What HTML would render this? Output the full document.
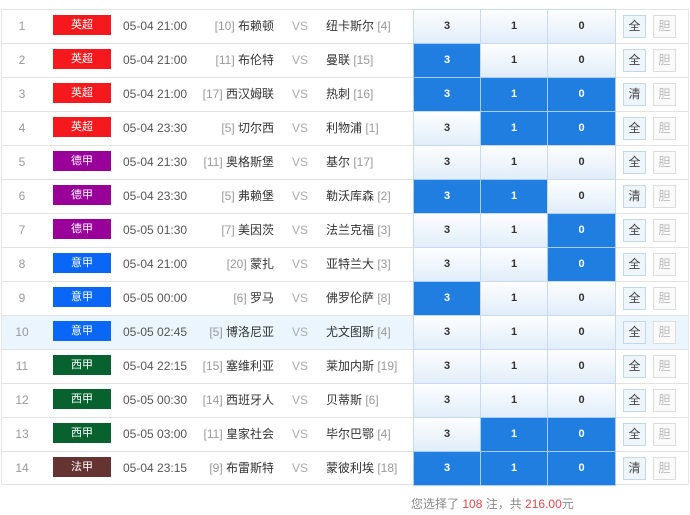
<!DOCTYPE html>
<html><head><meta charset="utf-8"><style>
*{margin:0;padding:0;box-sizing:border-box}
body{width:690px;height:515px;background:#fff;font-family:"Liberation Sans","Noto Sans CJK SC",sans-serif;position:relative;overflow:hidden}
.wrap{position:absolute;left:1px;top:9px;width:688px;border-left:1px solid #e6e6e6;border-right:1px solid #e6e6e6}
.r{position:relative;height:34px;border-top:1px solid #e2e2e2;font-size:12px;color:#555;line-height:33px}
.r.hl{background:#eaf5fd}
.n{position:absolute;left:0;width:40px;text-align:center;top:0;color:#999}
.b{position:absolute;left:51px;top:5px;width:58px;height:20px;color:#fff;text-align:center;line-height:20px;font-size:11px}
.t{position:absolute;left:121px;top:0;color:#555}
.h{position:absolute;right:414px;top:0;color:#333;white-space:nowrap}
.a{position:absolute;left:324px;top:0;color:#333;white-space:nowrap}
.h i,.a i{font-style:normal;color:#999}
.vs{position:absolute;left:290px;top:0;color:#aaa}
.o{position:absolute;top:-1px;height:35px;width:68px;border:1px solid #c9daee;background:linear-gradient(#fdfeff,#e1edf9);text-align:center;line-height:33px;font-weight:bold;font-size:11px;color:#333}
.o.s{background:#1f7ee0;color:#fff;border-color:#a9cdf3}
.o1{left:411px}.o2{left:478px}.o3{left:545px;width:69px}
.q,.d{position:absolute;top:5px;width:23px;height:23px;line-height:21px;text-align:center;font-size:12px}
.q{left:621px;border:1px solid #c4d6ea;background:#eef5fc;color:#444}
.d{left:651px;border:1px solid #ddd;background:#fafafa;color:#bbb}
.last{border-bottom:1px solid #e2e2e2}
.ft{position:absolute;left:411px;top:495px;font-size:12px;color:#888}
.ft em{font-style:normal;color:#e5484d}
</style></head><body>
<div class="wrap">
<div class="r"><span class="n">1</span><span class="b" style="background:#f5181c">英超</span><span class="t">05-04 21:00</span><span class="h"><i>[10]</i> 布赖顿</span><span class="vs">VS</span><span class="a">纽卡斯尔 <i>[4]</i></span><span class="o o1">3</span><span class="o o2">1</span><span class="o o3">0</span><span class="q">全</span><span class="d">胆</span></div>
<div class="r"><span class="n">2</span><span class="b" style="background:#f5181c">英超</span><span class="t">05-04 21:00</span><span class="h"><i>[11]</i> 布伦特</span><span class="vs">VS</span><span class="a">曼联 <i>[15]</i></span><span class="o o1 s">3</span><span class="o o2">1</span><span class="o o3">0</span><span class="q">全</span><span class="d">胆</span></div>
<div class="r"><span class="n">3</span><span class="b" style="background:#f5181c">英超</span><span class="t">05-04 21:00</span><span class="h"><i>[17]</i> 西汉姆联</span><span class="vs">VS</span><span class="a">热刺 <i>[16]</i></span><span class="o o1 s">3</span><span class="o o2 s">1</span><span class="o o3 s">0</span><span class="q">清</span><span class="d">胆</span></div>
<div class="r"><span class="n">4</span><span class="b" style="background:#f5181c">英超</span><span class="t">05-04 23:30</span><span class="h"><i>[5]</i> 切尔西</span><span class="vs">VS</span><span class="a">利物浦 <i>[1]</i></span><span class="o o1">3</span><span class="o o2 s">1</span><span class="o o3 s">0</span><span class="q">全</span><span class="d">胆</span></div>
<div class="r"><span class="n">5</span><span class="b" style="background:#990099">德甲</span><span class="t">05-04 21:30</span><span class="h"><i>[11]</i> 奥格斯堡</span><span class="vs">VS</span><span class="a">基尔 <i>[17]</i></span><span class="o o1">3</span><span class="o o2">1</span><span class="o o3">0</span><span class="q">全</span><span class="d">胆</span></div>
<div class="r"><span class="n">6</span><span class="b" style="background:#990099">德甲</span><span class="t">05-04 23:30</span><span class="h"><i>[5]</i> 弗赖堡</span><span class="vs">VS</span><span class="a">勒沃库森 <i>[2]</i></span><span class="o o1 s">3</span><span class="o o2 s">1</span><span class="o o3">0</span><span class="q">清</span><span class="d">胆</span></div>
<div class="r"><span class="n">7</span><span class="b" style="background:#990099">德甲</span><span class="t">05-05 01:30</span><span class="h"><i>[7]</i> 美因茨</span><span class="vs">VS</span><span class="a">法兰克福 <i>[3]</i></span><span class="o o1">3</span><span class="o o2">1</span><span class="o o3 s">0</span><span class="q">全</span><span class="d">胆</span></div>
<div class="r"><span class="n">8</span><span class="b" style="background:#0a66f5">意甲</span><span class="t">05-04 21:00</span><span class="h"><i>[20]</i> 蒙扎</span><span class="vs">VS</span><span class="a">亚特兰大 <i>[3]</i></span><span class="o o1">3</span><span class="o o2">1</span><span class="o o3 s">0</span><span class="q">全</span><span class="d">胆</span></div>
<div class="r"><span class="n">9</span><span class="b" style="background:#0a66f5">意甲</span><span class="t">05-05 00:00</span><span class="h"><i>[6]</i> 罗马</span><span class="vs">VS</span><span class="a">佛罗伦萨 <i>[8]</i></span><span class="o o1 s">3</span><span class="o o2">1</span><span class="o o3">0</span><span class="q">全</span><span class="d">胆</span></div>
<div class="r hl"><span class="n">10</span><span class="b" style="background:#0a66f5">意甲</span><span class="t">05-05 02:45</span><span class="h"><i>[5]</i> 博洛尼亚</span><span class="vs">VS</span><span class="a">尤文图斯 <i>[4]</i></span><span class="o o1">3</span><span class="o o2">1</span><span class="o o3">0</span><span class="q">全</span><span class="d">胆</span></div>
<div class="r"><span class="n">11</span><span class="b" style="background:#07622f">西甲</span><span class="t">05-04 22:15</span><span class="h"><i>[15]</i> 塞维利亚</span><span class="vs">VS</span><span class="a">莱加内斯 <i>[19]</i></span><span class="o o1">3</span><span class="o o2">1</span><span class="o o3">0</span><span class="q">全</span><span class="d">胆</span></div>
<div class="r"><span class="n">12</span><span class="b" style="background:#07622f">西甲</span><span class="t">05-05 00:30</span><span class="h"><i>[14]</i> 西班牙人</span><span class="vs">VS</span><span class="a">贝蒂斯 <i>[6]</i></span><span class="o o1">3</span><span class="o o2">1</span><span class="o o3">0</span><span class="q">全</span><span class="d">胆</span></div>
<div class="r"><span class="n">13</span><span class="b" style="background:#07622f">西甲</span><span class="t">05-05 03:00</span><span class="h"><i>[11]</i> 皇家社会</span><span class="vs">VS</span><span class="a">毕尔巴鄂 <i>[4]</i></span><span class="o o1">3</span><span class="o o2 s">1</span><span class="o o3 s">0</span><span class="q">全</span><span class="d">胆</span></div>
<div class="r last"><span class="n">14</span><span class="b" style="background:#663333">法甲</span><span class="t">05-04 23:15</span><span class="h"><i>[9]</i> 布雷斯特</span><span class="vs">VS</span><span class="a">蒙彼利埃 <i>[18]</i></span><span class="o o1 s">3</span><span class="o o2 s">1</span><span class="o o3 s">0</span><span class="q">清</span><span class="d">胆</span></div>
</div>
<div class="ft">您选择了 <em>108</em> 注，共 <em>216.00</em>元</div>
</body></html>
